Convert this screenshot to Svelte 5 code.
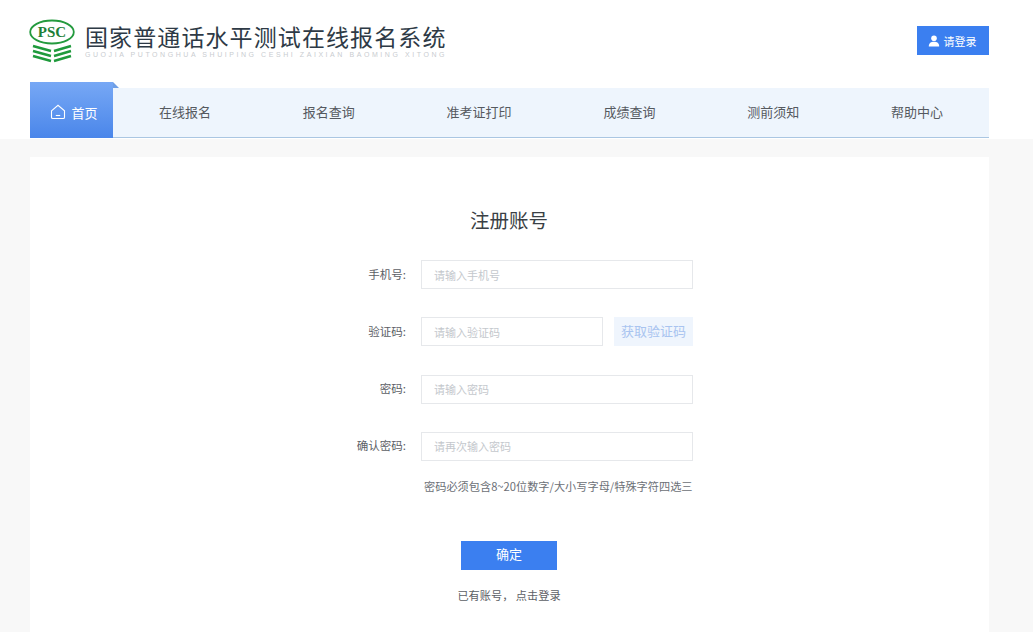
<script>
  const navItems = ['在线报名', '报名查询', '准考证打印', '成绩查询', '测前须知', '帮助中心'];
  const fields = [
    { label: '手机号:', placeholder: '请输入手机号' },
    { label: '验证码:', placeholder: '请输入验证码', code: true },
    { label: '密码:', placeholder: '请输入密码' },
    { label: '确认密码:', placeholder: '请再次输入密码' }
  ];
</script>

<div class="page">
  <header class="top">
    <div class="brand">
      <svg class="logo" viewBox="0 0 46 44" width="46" height="44">
        <ellipse cx="23" cy="13" rx="21.800" ry="11.500" fill="none" stroke="#249a3e" stroke-width="1.800" />
        <text x="23" y="18" text-anchor="middle" class="logo-text">PSC</text>
        <path d="M4 27 L22 32 M4 32 L22 37 M4 37 L22 42 M42 27 L25 32 M42 32 L25 37 M42 37 L25 42" fill="none" stroke="#1f9a3c" stroke-width="2.500" />
      </svg>
      <div class="brand-text">
        <div class="brand-name">国家普通话水平测试在线报名系统</div>
        <div class="brand-sub">GUOJIA PUTONGHUA SHUIPING CESHI ZAIXIAN BAOMING XITONG</div>
      </div>
    </div>
    <button class="login">
      <svg viewBox="0 0 12 12" width="12" height="12">
        <circle cx="6" cy="3.200" r="2.800" fill="#fff" />
        <path d="M0.800 11.500 C0.800 8 3 6.800 6 6.800 C9 6.800 11.200 8 11.200 11.500 Z" fill="#fff" />
      </svg>
      请登录
    </button>
  </header>

  <nav class="nav">
    <div class="nav-home">
      <svg viewBox="0 0 16 16" width="16" height="16">
        <path d="M1.500 6.800 L8 1.300 L14.500 6.800 V13.200 Q14.500 14.500 13.200 14.500 H2.800 Q1.500 14.500 1.500 13.200 Z" fill="none" stroke="#fff" stroke-width="1.100" />
        <path d="M5.800 11.500 H10.200" stroke="#fff" stroke-width="1.100" />
      </svg>
      首页
    </div>
    <div class="nav-list">
      {#each navItems as item}
        <span class="nav-item">{item}</span>
      {/each}
    </div>
  </nav>

  <main class="card">
    <h1 class="title">注册账号</h1>
    <form class="form">
      {#each fields as f}
        <label class="label" for={f.placeholder}>{f.label}</label>
        <div class="control">
          <input id={f.placeholder} class="input" type="text" placeholder={f.placeholder} />
          {#if f.code}
            <button type="button" class="code-btn">获取验证码</button>
          {/if}
        </div>
      {/each}
    </form>
    <p class="hint">密码必须包含8~20位数字/大小写字母/特殊字符四选三</p>
    <button class="submit">确定</button>
    <p class="switch">已有账号， 点击登录</p>
  </main>
</div>

<style>
  :global(body) {
    background: #f8f8f8;
    font-family: "Noto Sans CJK SC", "Liberation Sans", sans-serif;
  }
  .page {
    height: 632px;
    overflow: hidden;
    display: flex;
    flex-direction: column;
    background: linear-gradient(#fff 139px, #f8f8f8 139px);
    padding: 0 44px 0 30px;
    box-sizing: border-box;
  }
  .top {
    height: 82px;
    flex: none;
    display: flex;
    align-items: flex-start;
    justify-content: space-between;
  }
  .brand {
    display: flex;
    align-items: flex-start;
    padding-top: 19px;
  }
  .logo {
    margin-right: 10px;
    margin-left: -1px;
  }
  .logo-text {
    font-family: "Liberation Serif", serif;
    font-weight: 700;
    font-size: 15px;
    fill: #1d7f38;
  }
  .brand-name {
    font-size: 23px;
    line-height: 34px;
    letter-spacing: 1.100px;
    color: #2e3a46;
    white-space: nowrap;
  }
  .brand-sub {
    margin-top: -2px;
    font-family: "Liberation Sans", sans-serif;
    font-size: 7px;
    line-height: 8px;
    letter-spacing: 2.560px;
    color: #c9ccd0;
    white-space: nowrap;
  }
  .login {
    margin-top: 26px;
    width: 72px;
    height: 29px;
    border: 0;
    background: #3b7ff0;
    color: #fff;
    font: 11px "Noto Sans CJK SC", sans-serif;
    display: flex;
    align-items: center;
    justify-content: center;
    gap: 4px;
    padding: 0 2px 0 0;
  }
  .nav {
    display: flex;
    height: 56px;
    flex: none;
    align-items: flex-end;
  }
  .nav-home {
    position: relative;
    width: 83px;
    height: 56px;
    flex: none;
    background: linear-gradient(#77a8f5, #4a86ea);
    color: #fff;
    font-size: 13px;
    display: flex;
    align-items: center;
    justify-content: center;
    gap: 5px;
    padding: 4px 0 0 5px;
    box-sizing: border-box;
  }
  .nav-home::after {
    content: "";
    position: absolute;
    top: 0;
    left: 100%;
    border-left: 6px solid #6f9fe6;
    border-top: 6px solid transparent;
  }
  .nav-list {
    flex: 1;
    height: 50px;
    box-sizing: border-box;
    background: #eef5fd;
    border-bottom: 1px solid #aac6e2;
    padding-bottom: 2px;
    display: flex;
    align-items: center;
    justify-content: space-around;
  }
  .nav-item {
    font-size: 13px;
    color: #55595f;
  }
  .card {
    margin-top: 19px;
    flex: 1;
    background: #fff;
    display: flex;
    flex-direction: column;
    align-items: center;
    padding-right: 1px;
  }
  .title {
    margin: 50px 0 0;
    font-size: 19.500px;
    line-height: 26px;
    font-weight: 400;
    color: #3a3f45;
  }
  .form {
    margin-top: 27px;
    width: 400px;
    display: grid;
    grid-template-columns: 112px 272px;
    row-gap: 28.300px;
    align-items: center;
  }
  .label {
    font-size: 11.500px;
    color: #5c6066;
    text-align: right;
    padding-right: 15px;
    padding-bottom: 2px;
  }
  .control {
    display: flex;
    gap: 11px;
  }
  .input {
    flex: 1;
    min-width: 0;
    height: 29px;
    box-sizing: border-box;
    border: 1px solid #e6e8eb;
    padding: 0 12px;
    font: 11px "Noto Sans CJK SC", sans-serif;
    outline: none;
    background: #fff;
  }
  .input::placeholder {
    color: #c4c8cd;
  }
  .code-btn {
    width: 79px;
    flex: none;
    border: 0;
    padding: 0 0 2px;
    background: #eff5fd;
    color: #a9c4f0;
    font: 13px "Noto Sans CJK SC", sans-serif;
  }
  .hint {
    margin: 17px 0 0;
    width: 400px;
    padding-left: 115px;
    box-sizing: border-box;
    font-size: 11.200px;
    line-height: 16px;
    color: #6c7076;
    white-space: nowrap;
  }
  .submit {
    margin-top: 47px;
    width: 96px;
    height: 29px;
    border: 0;
    padding: 0 0 3px;
    background: #3b7ff0;
    color: #fff;
    font: 13px "Noto Sans CJK SC", sans-serif;
  }
  .switch {
    margin: 17px 0 0;
    font-size: 11.200px;
    line-height: 16px;
    color: #5c6066;
    white-space: pre;
  }
</style>
